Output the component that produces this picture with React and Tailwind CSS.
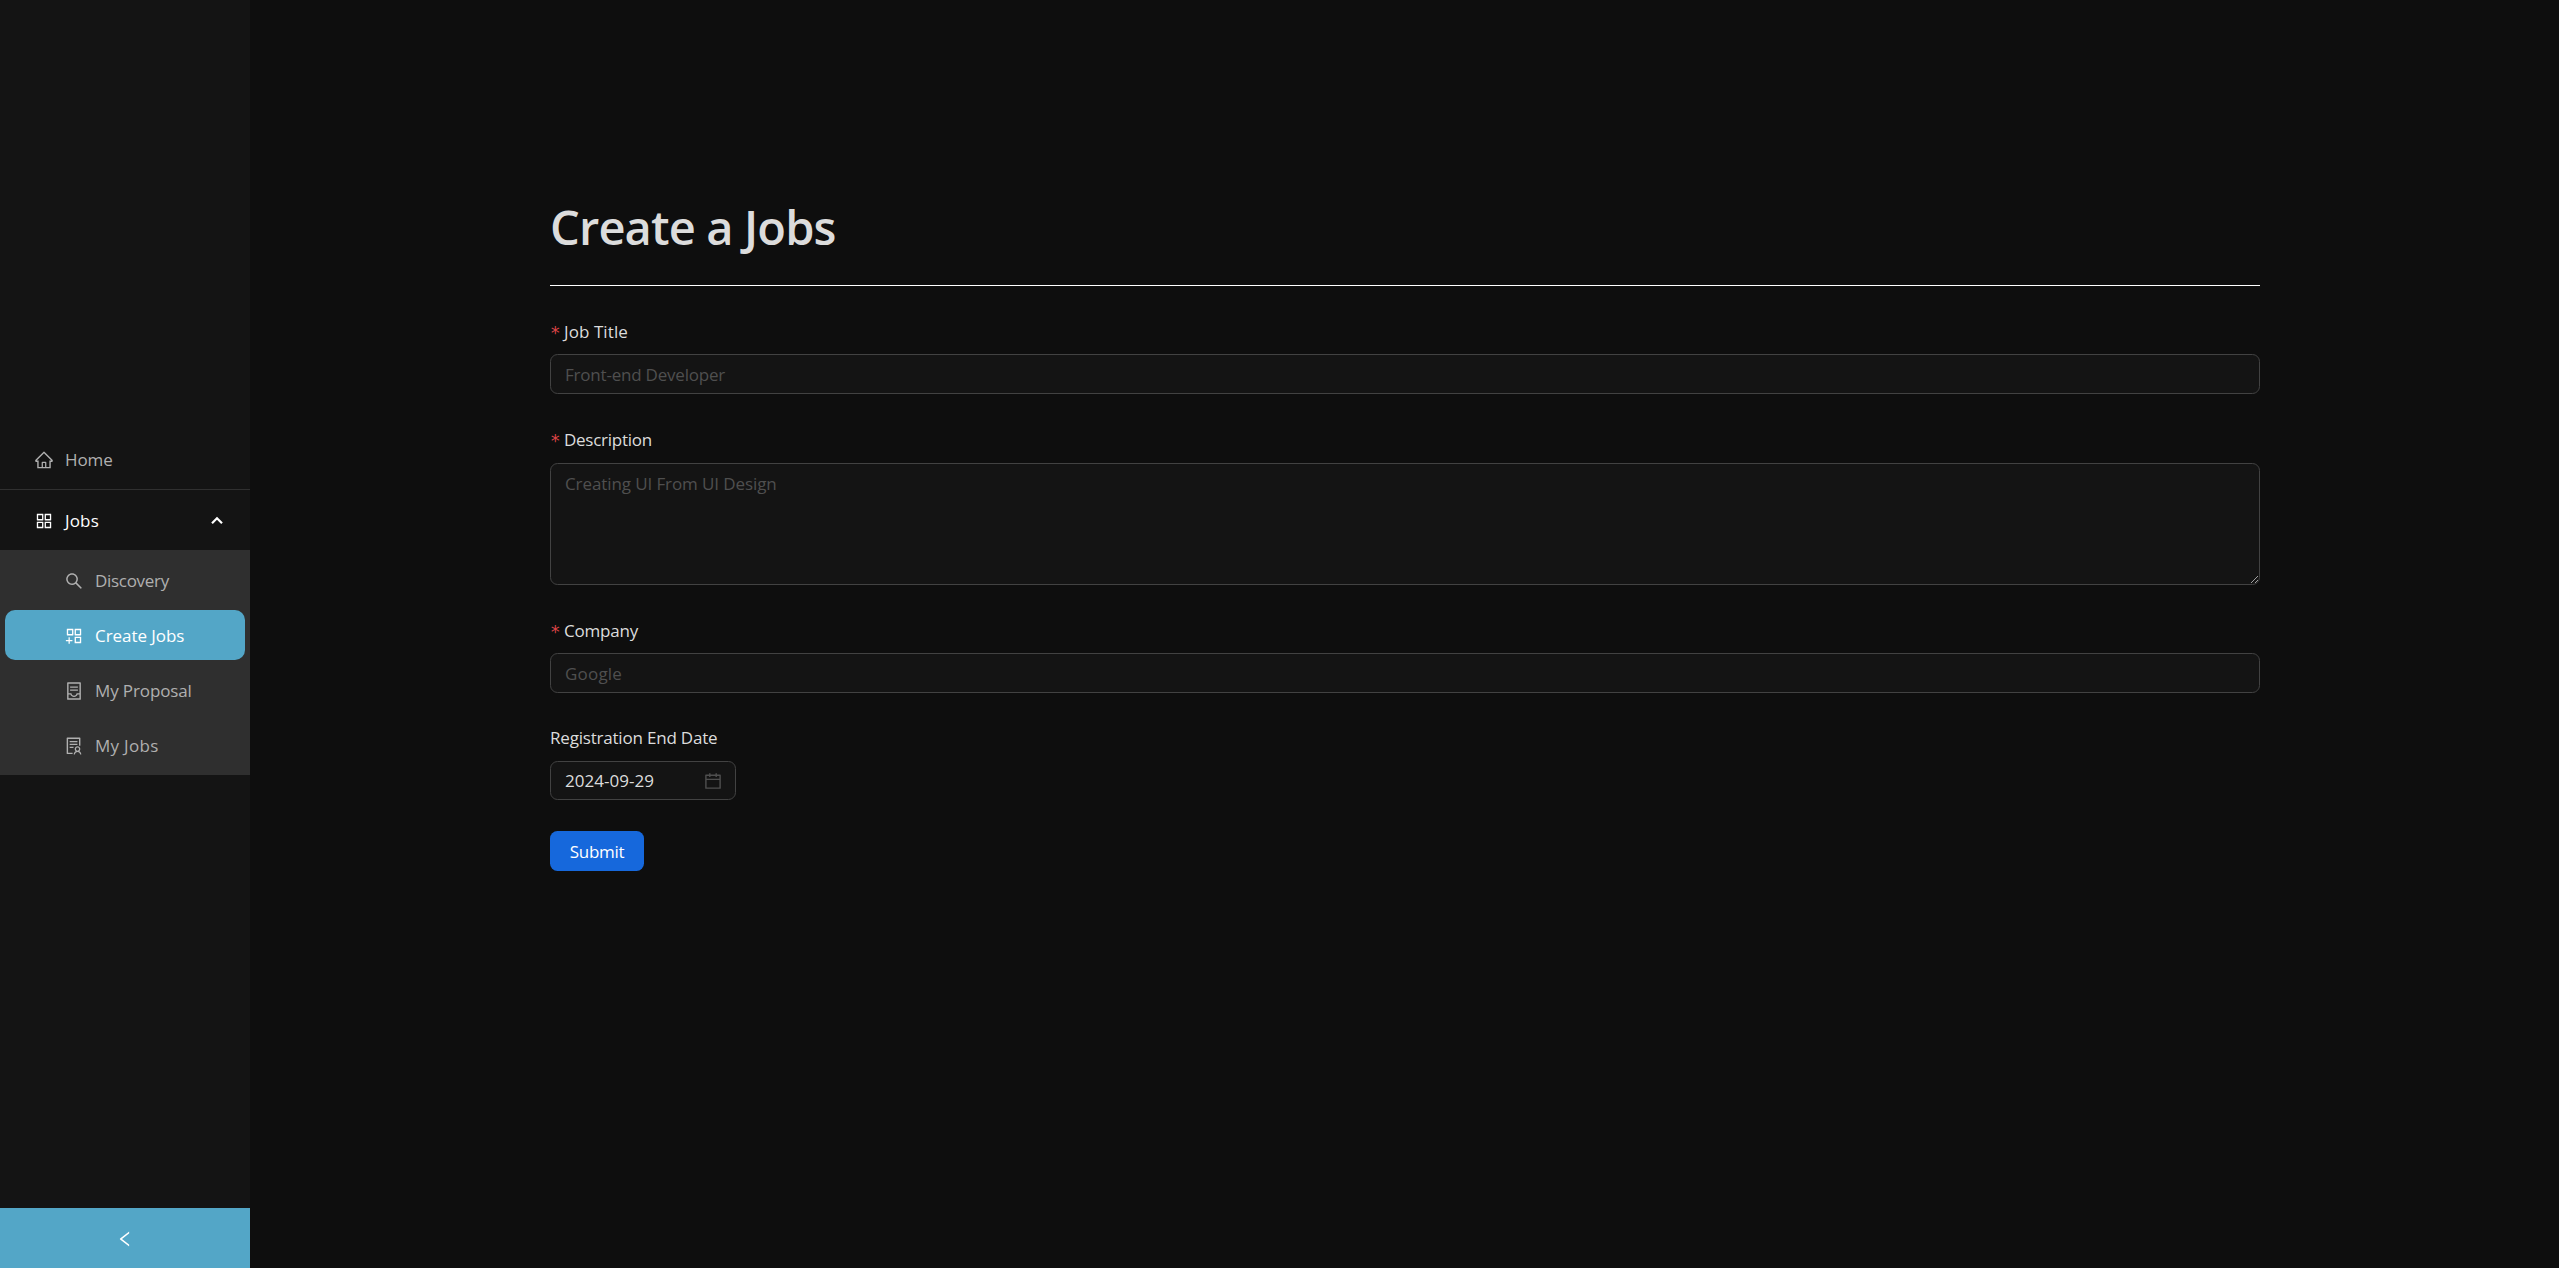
import React from "react";
import {
  AiOutlineHome,
  AiOutlineAppstore,
  AiOutlineAppstoreAdd,
  AiOutlineSearch,
  AiOutlineContainer,
  AiOutlineSolution,
  AiOutlineCalendar,
  AiOutlineLeft,
} from "react-icons/ai";

const subItems = [
  { label: "Discovery", Icon: AiOutlineSearch, tracking: "tracking-[-0.3px]" },
  { label: "Create Jobs", Icon: AiOutlineAppstoreAdd, tracking: "tracking-[-0.06px]", active: true },
  { label: "My Proposal", Icon: AiOutlineContainer, tracking: "tracking-[-0.12px]" },
  { label: "My Jobs", Icon: AiOutlineSolution, tracking: "tracking-[0.3px]" },
];

function Sidebar() {
  return (
    <aside className="flex h-full w-[250px] shrink-0 flex-col bg-[#141414] text-[#b0b0b0]">
      <nav className="flex flex-1 flex-col pt-[435px]">
        <a className="flex h-[50px] items-center pl-[34px]">
          <AiOutlineHome className="size-5 shrink-0" />
          <span className="ml-[11px] pb-[2px] tracking-[-0.07px]">Home</span>
        </a>
        <hr className="mt-1 mb-[5px] border-0 border-t border-[#303030]" />
        <div className="flex h-[50px] items-center pr-[27px] pl-[34px] text-white">
          <AiOutlineAppstore className="mt-px size-5 shrink-0" />
          <span className="ml-[11px] flex-1 tracking-[0.15px]">Jobs</span>
          <svg className="mt-px h-[9px] w-3" viewBox="0 0 12 9" fill="none" stroke="currentColor" strokeWidth="2.2">
            <path d="M1 7.3 6 2.3l5 5" />
          </svg>
        </div>
        <ul className="mt-[5px] flex flex-col gap-[5px] bg-[#2f2f2f] p-[5px]">
          {subItems.map(({ label, Icon, tracking, active }) => (
            <li
              key={label}
              className={`flex h-[50px] items-center rounded-[10px] pl-[59px] ${active ? "bg-[#53a6c7] text-white" : ""}`}
            >
              <Icon className="mt-px size-5 shrink-0" />
              <span className={`ml-[11px] ${tracking}`}>{label}</span>
            </li>
          ))}
        </ul>
      </nav>
      <button className="flex h-[60px] items-center justify-center bg-[#53a6c7] text-white">
        <AiOutlineLeft className="mt-px size-5" />
      </button>
    </aside>
  );
}

function Label({ children, tracking, required }) {
  return (
    <label className="flex h-[27px] items-center text-[#dcdcdc]">
      {required && (
        <span className="mr-[5px] h-[27px] w-[9px] font-['DejaVu_Sans_Mono'] text-[17.5px] leading-[31px] text-[#dc4446]">*</span>
      )}
      <span className={tracking}>{children}</span>
    </label>
  );
}

const field =
  "block w-full resize-none rounded-[7.5px] border border-[#424242] bg-[#141414] px-[14px] text-[#dcdcdc] outline-none placeholder:text-[#4f4f4f]";

export default function App() {
  return (
    <div className="flex h-[1268px] w-full overflow-hidden bg-[#0e0e0e] font-['Open_Sans',sans-serif] text-[17px] leading-[27px]">
      <Sidebar />
      <main className="flex-1 pl-[300px]">
        <div className="w-[1710px] pt-[197px]">
          <h1 className="h-[60px] text-[47px] leading-[60px] font-semibold tracking-[-0.85px] text-[#dcdcdc]">Create a Jobs</h1>
          <hr className="mt-[28px] border-0 border-t border-white" />
          <form className="mt-[32px] flex flex-col">
            <Label required tracking="tracking-[0.08px]">Job Title</Label>
            <input className={`${field} mt-[9px] h-10 tracking-[-0.21px]`} placeholder="Front-end Developer" />

            <div className="mt-[32px]">
              <Label required tracking="tracking-[-0.26px]">Description</Label>
            </div>
            <div className="relative mt-[10px] h-[122px]">
              <textarea
                className={`${field} h-[122px] py-[6px] tracking-[-0.1px]`}
                placeholder="Creating UI From UI Design"
              />
              <svg
                className="absolute right-[1px] bottom-[1px] h-[9px] w-[9px]"
                viewBox="0 0 9 9"
                fill="none"
                stroke="#c4c4c4"
                strokeWidth="0.8"
              >
                <path d="M1 8 8 1M5 8l3-3" />
              </svg>
            </div>

            <div className="mt-[32px]">
              <Label required tracking="tracking-[-0.2px]">Company</Label>
            </div>
            <input className={`${field} mt-[9px] h-10 tracking-[0.19px]`} placeholder="Google" />

            <div className="mt-[31px]">
              <Label tracking="tracking-[-0.2px]">Registration End Date</Label>
            </div>
            <div className="mt-[10px] flex h-[39px] w-[186px] items-center justify-between rounded-[7.5px] border border-[#424242] bg-[#141414] pr-[12px] pl-[14px]">
              <span className="tracking-[0.04px] text-[#dcdcdc]">2024-09-29</span>
              <AiOutlineCalendar className="size-5 text-[#4f4f4f]" />
            </div>

            <button
              type="button"
              className="mt-[31px] h-10 w-[94px] rounded-[7.5px] bg-[#1668dc] tracking-[-0.3px] text-white"
            >
              Submit
            </button>
          </form>
        </div>
      </main>
    </div>
  );
}
